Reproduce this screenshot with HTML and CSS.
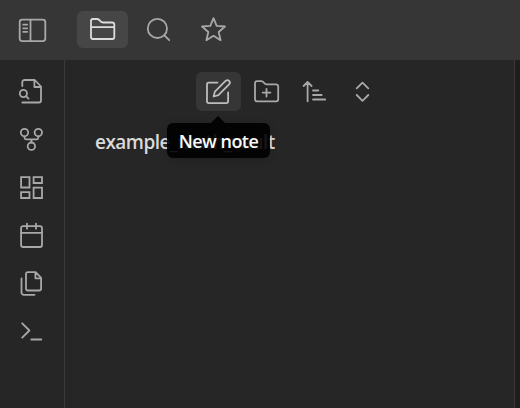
FILE: index.html
```html
<!DOCTYPE html>
<html lang="en">
<head>
<meta charset="utf-8">
<title>Notes</title>
<link rel="stylesheet" href="styles.css">
</head>
<body>
<div class="app">
  <header class="topbar">
    <button class="icon-btn toggle" aria-label="Toggle sidebar"><svg width="32" height="30" viewBox="16 15 32 30"><rect x="19.7" y="19.7" width="25.6" height="21.4" rx="2.5"/><path d="M30.5 20v21M23.2 24.7h4M23.2 28.3h4M23.2 31.8h4"/></svg></button>
    <button class="icon-btn tab active" aria-label="Files"><svg width="32" height="30" viewBox="87 15 32 30"><path d="M91 37V21a2 2 0 0 1 2-2h4.2c1.5 0 2 .7 3 2s1.300 1.500 3 1.500H112a2.300 2.300 0 0 1 2.300 2.300V37a2 2 0 0 1-2 2H93a2 2 0 0 1-2-2zM91 27.200h23.300"/></svg></button>
    <button class="icon-btn tab" aria-label="Search"><svg width="32" height="30" viewBox="142 15 32 30"><circle cx="157.400" cy="28.400" r="9.600"/><path d="m164.400 35.400 4.800 4.800"/></svg></button>
    <button class="icon-btn tab" aria-label="Starred"><svg width="32" height="30" viewBox="197 15 32 30"><path d="m213.500 18.200 3.200 7.600 8.300.7-6.300 5.500 1.900 8.200-7.100-4.400-7.100 4.400 1.900-8.200-6.300-5.500 8.300-.7z"/></svg></button>
  </header>
  <div class="body">
    <nav class="ribbon">
      <button class="icon-btn" aria-label="Quick switcher"><svg width="32" height="32" viewBox="16 75 32 32"><path d="M22.300 86v-3.700a2.300 2.300 0 0 1 2.300-2.300h10.200l6.200 6.500v14a2 2 0 0 1-2 2H22.300M34.400 80v7H41"/><circle cx="23.400" cy="93.500" r="3.600"/><path d="m26 96.200 2.500 2.400"/></svg></button>
      <button class="icon-btn" aria-label="Graph view"><svg width="32" height="32" viewBox="16 123 32 32"><circle cx="24.500" cy="132.600" r="3.700"/><circle cx="38.300" cy="132.600" r="3.700"/><circle cx="31.400" cy="146.200" r="3.700"/><path d="M24.500 136.300v1.500a1.500 1.500 0 0 0 1.500 1.500h10.800a1.500 1.500 0 0 0 1.500-1.500v-1.500M31.400 139.300v3.200"/></svg></button>
      <button class="icon-btn" aria-label="Canvas"><svg width="32" height="32" viewBox="16 171 32 32"><path class="miter" d="M21.100 177.100h8.400v10.400h-8.400zM33.600 177.100H42v5.900h-8.400zM21.100 192.100h8.400v5.900h-8.400zM33.600 187.600H42V198h-8.400z"/></svg></button>
      <button class="icon-btn" aria-label="Daily note"><svg width="32" height="32" viewBox="16 219 32 32"><rect x="21.100" y="226.200" width="20.900" height="20.800" rx="2"/><path d="M21.100 232.800H42M27 223.700v5M36 223.700v5"/></svg></button>
      <button class="icon-btn" aria-label="Templates"><svg width="32" height="32" viewBox="16 267 32 32"><path d="M28 272.100h7.700l5.400 5.700v10.700a2 2 0 0 1-2 2H28a2 2 0 0 1-2-2v-14.400a2 2 0 0 1 2-2zM35.400 272.300v6H41M21.500 278.500v14a2.300 2.300 0 0 0 2.300 2.300h10.700"/></svg></button>
      <button class="icon-btn" aria-label="Command palette"><svg width="32" height="32" viewBox="16 315 32 32"><path d="m22.200 323.300 7.200 7.200-7.200 7.200M31.300 339.500h10"/></svg></button>
    </nav>
    <main class="explorer">
      <div class="actions">
        <div class="anchor">
          <button class="icon-btn action active" aria-label="New note"><svg width="32" height="32" viewBox="203 76 32 32"><path d="M217.500 82.600h-8.700a1.800 1.800 0 0 0-1.800 1.800v16.900a1.800 1.800 0 0 0 1.800 1.800h17.500a1.800 1.800 0 0 0 1.800-1.800v-8.800M213.600 96.500l1.300-4.900 10.900-10.900a2.500 2.500 0 0 1 3.500 3.500l-10.900 10.900z"/></svg></button>
          <div class="tooltip">New note</div>
        </div>
        <button class="icon-btn action" aria-label="New folder"><svg width="32" height="32" viewBox="251 76 32 32"><path d="M255 99.300V83.200a2 2 0 0 1 2-2h4.300c1.200 0 1.700.4 2.400 1.400.8 1.200 1.300 1.700 2.800 1.700h9.500a2.200 2.200 0 0 1 2.200 2.200v12.800a2 2 0 0 1-2 2H257a2 2 0 0 1-2-2zM262.700 92.600h7.700M266.500 88.800v7.700"/></svg></button>
        <button class="icon-btn action" aria-label="Change sort order"><svg width="32" height="32" viewBox="299 76 32 32"><path d="M307.600 101.300V82M303.600 86l4-4 4 4M313 90.500h5.300M313 95h8.700M313 99.500h12.200"/></svg></button>
        <button class="icon-btn action" aria-label="Expand all"><svg width="32" height="32" viewBox="347 76 32 32"><path d="m356.700 88.400 5.800-5.800 5.800 5.800M356.700 95l5.800 5.800 5.800-5.800"/></svg></button>
      </div>
      <div class="vault">example_math_vault</div>
    </main>
    <div class="editor"></div>
  </div>
</div>
</body>
</html>
```
FILE: styles.css
```css
* { box-sizing: border-box; }
body { margin: 0; background: #262626; font-family: "Open Sans", "Noto Sans", sans-serif; }
.app { display: flex; flex-direction: column; width: 520px; height: 408px; overflow: hidden; }
.topbar { display: flex; align-items: center; flex: none; height: 60px; padding: 0 0 1px 16px; gap: 4px; background: #363636; }
.icon-btn { display: flex; align-items: center; justify-content: center; flex: none; margin: 0; padding: 0; border: 0; background: none; color: #a8a8a8; }
.icon-btn svg { display: block; fill: none; stroke: currentColor; stroke-width: 1.8; stroke-linecap: round; stroke-linejoin: round; }
.icon-btn .miter { stroke-linejoin: miter; }
.toggle { margin-right: 25px; }
.tab { width: 51px; height: 37px; border-radius: 6px; }
.tab.active { background: #464646; color: #dcdcdc; }
.body { display: flex; flex: 1; }
.ribbon { display: flex; flex-direction: column; align-items: center; gap: 16px; width: 65px; padding-top: 15px; border-right: 1px solid #3a3a3a; }
.ribbon .icon-btn { width: 32px; height: 32px; }
.explorer { width: 450px; padding-top: 12px; border-right: 1px solid #3a3a3a; }
.actions { display: flex; gap: 3px; padding-left: 131px; }
.anchor { position: relative; }
.action { width: 45px; height: 39px; border-radius: 6px; }
.action.active { background: #363636; color: #bdbdbd; }
.vault { width: max-content; margin: 17px 0 0 30px; font-size: 19px; line-height: 28px; font-weight: 600; letter-spacing: -0.54px; color: #dadada; }
.tooltip { position: absolute; z-index: 1; top: 51px; left: -29px; width: 103px; height: 35px; border-radius: 6px; background: rgba(0, 0, 0, .9); box-shadow: 0 2px 8px rgba(0, 0, 0, .15); color: #fafafa; font-size: 18px; line-height: 36px; font-weight: 600; letter-spacing: -0.5px; text-align: center; white-space: nowrap; }
.tooltip::before { content: ""; position: absolute; left: 44px; top: -7px; border: solid transparent; border-width: 0 7px 7px; border-bottom-color: rgba(0, 0, 0, .9); }
.editor { flex: 1; background: #1e1e1e; }
```
